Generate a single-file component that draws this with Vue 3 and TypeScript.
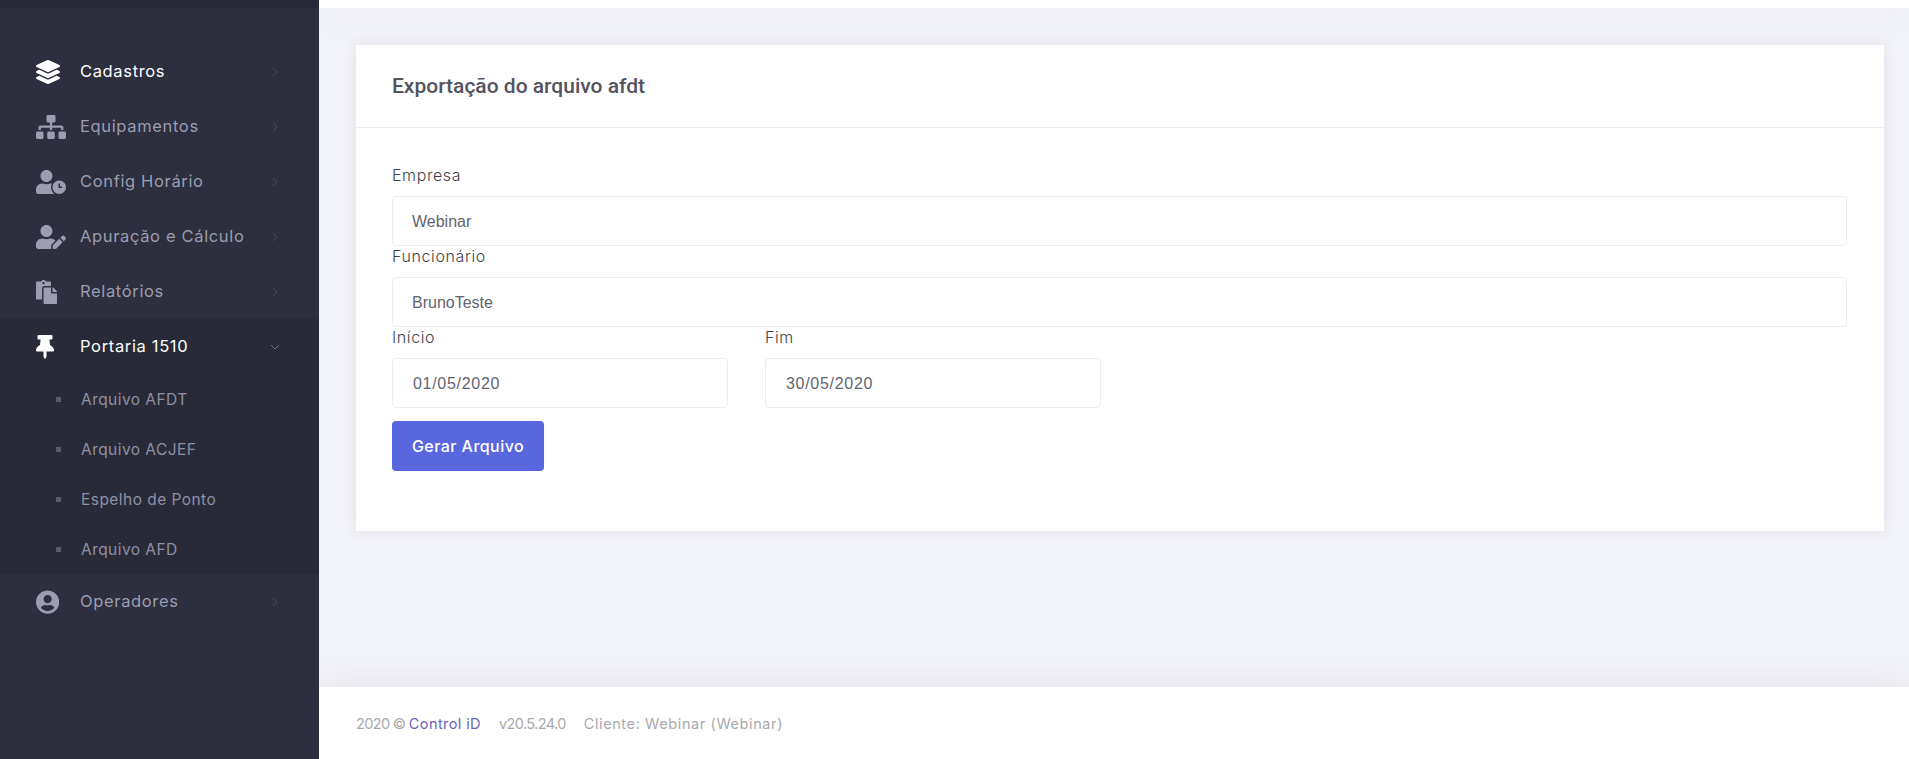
<script setup lang="ts">
interface MenuItem {
  label: string
  icon: string
  box: string
  open?: boolean
  active?: boolean
  children?: string[]
}

const menu: MenuItem[] = [
  {
    label: 'Cadastros',
    active: true,
    box: '0 0 512 512',
    icon: 'M12.41 148.02l232.94 105.67c6.8 3.09 14.49 3.09 21.29 0l232.94-105.67c16.55-7.51 16.55-32.52 0-40.03L266.65 2.31a25.607 25.607 0 0 0-21.29 0L12.41 107.98c-16.55 7.51-16.55 32.53 0 40.04zm487.18 88.28l-58.09-26.33-161.64 73.27c-7.56 3.43-15.59 5.17-23.86 5.17s-16.29-1.74-23.86-5.17L70.51 209.97l-58.1 26.33c-16.55 7.5-16.55 32.5 0 40l232.94 105.59c6.8 3.08 14.49 3.08 21.29 0L499.59 276.3c16.55-7.5 16.55-32.5 0-40zm0 127.8l-57.87-26.23-161.86 73.37c-7.56 3.43-15.59 5.17-23.86 5.17s-16.29-1.74-23.86-5.17L70.29 337.87 12.41 364.1c-16.55 7.5-16.55 32.5 0 40l232.94 105.59c6.8 3.08 14.49 3.08 21.29 0L499.59 404.1c16.55-7.5 16.55-32.5 0-40z',
  },
  {
    label: 'Equipamentos',
    box: '0 0 640 512',
    icon: 'M128 352H32c-17.67 0-32 14.33-32 32v96c0 17.67 14.33 32 32 32h96c17.67 0 32-14.33 32-32v-96c0-17.67-14.33-32-32-32zm-24-80h192v48h48v-48h192v48h48v-57.59c0-21.17-17.23-38.41-38.41-38.41H344v-64h40c17.67 0 32-14.33 32-32V32c0-17.67-14.33-32-32-32H256c-17.67 0-32 14.33-32 32v96c0 17.67 14.33 32 32 32h40v64H94.41C73.23 224 56 241.23 56 262.41V320h48v-48zm264 80h-96c-17.67 0-32 14.33-32 32v96c0 17.67 14.33 32 32 32h96c17.67 0 32-14.33 32-32v-96c0-17.67-14.33-32-32-32zm240 0h-96c-17.67 0-32 14.33-32 32v96c0 17.67 14.33 32 32 32h96c17.67 0 32-14.33 32-32v-96c0-17.67-14.33-32-32-32z',
  },
  {
    label: 'Config Horário',
    box: '0 0 640 512',
    icon: 'M496 224c-79.6 0-144 64.4-144 144s64.4 144 144 144 144-64.4 144-144-64.4-144-144-144zm64 150.3c0 5.3-4.4 9.7-9.7 9.7h-60.6c-5.3 0-9.7-4.4-9.7-9.7v-76.6c0-5.3 4.4-9.7 9.7-9.7h12.6c5.3 0 9.7 4.4 9.7 9.7V352h38.3c5.3 0 9.7 4.4 9.7 9.7v12.6zM320 368c0-27.8 6.7-54.1 18.2-77.5-8-1.5-16.2-2.5-24.6-2.5h-16.7c-22.2 10.2-46.9 16-72.9 16s-50.6-5.8-72.9-16h-16.7C60.2 288 0 348.2 0 422.4V464c0 26.5 21.5 48 48 48h347.1c-45.3-31.9-75.1-84.5-75.1-144zm-96-112c70.7 0 128-57.3 128-128S294.7 0 224 0 96 57.3 96 128s57.3 128 128 128z',
  },
  {
    label: 'Apuração e Cálculo',
    box: '0 0 640 512',
    icon: 'M224 256c70.7 0 128-57.3 128-128S294.7 0 224 0 96 57.3 96 128s57.3 128 128 128zm89.6 32h-16.7c-22.2 10.2-46.9 16-72.9 16s-50.6-5.8-72.9-16h-16.7C60.2 288 0 348.2 0 422.4V464c0 26.5 21.5 48 48 48h274.9c-2.4-6.8-3.4-14-2.6-21.3l6.8-60.9 1.2-11.1 7.9-7.9 77.3-77.3c-24.5-27.7-60-45.5-99.9-45.5zm45.3 145.3l-6.8 61c-1.1 10.2 7.5 18.8 17.6 17.6l60.9-6.8 137.9-137.9-71.7-71.7-137.9 137.8zM633 268.9L595.1 231c-9.3-9.3-24.5-9.3-33.8 0l-37.8 37.8-4.1 4.1 71.8 71.7 41.8-41.8c9.3-9.4 9.3-24.5 0-33.9z',
  },
  {
    label: 'Relatórios',
    box: '0 0 448 512',
    icon: 'M128 184c0-30.879 25.122-56 56-56h136V56c0-13.255-10.745-24-24-24h-80.61C204.306 12.89 183.637 0 160 0s-44.306 12.89-55.39 32H24C10.745 32 0 42.745 0 56v336c0 13.255 10.745 24 24 24h104V184zm32-144c13.255 0 24 10.745 24 24s-10.745 24-24 24-24-10.745-24-24 10.745-24 24-24zm184 248h104v200c0 13.255-10.745 24-24 24H184c-13.255 0-24-10.745-24-24V184c0-13.255 10.745-24 24-24h136v104c0 13.2 10.8 24 24 24zm104-38.059V256h-96v-96h6.059a24 24 0 0 1 16.97 7.029l65.941 65.941a24.002 24.002 0 0 1 7.03 16.971z',
  },
  {
    label: 'Portaria 1510',
    active: true,
    open: true,
    box: '0 0 384 512',
    icon: 'M298.028 214.267L285.793 96H328c13.255 0 24-10.745 24-24V24c0-13.255-10.745-24-24-24H56C42.745 0 32 10.745 32 24v48c0 13.255 10.745 24 24 24h42.207L85.972 214.267C37.465 236.82 0 277.261 0 328c0 13.255 10.745 24 24 24h136v104.007c0 1.242.289 2.467.845 3.578l24 48c2.941 5.882 11.364 5.893 14.311 0l24-48a8.008 8.008 0 0 0 .845-3.578V352h136c13.255 0 24-10.745 24-24-.001-51.183-37.983-91.42-85.973-113.733z',
    children: ['Arquivo AFDT', 'Arquivo ACJEF', 'Espelho de Ponto', 'Arquivo AFD'],
  },
  {
    label: 'Operadores',
    box: '0 0 496 512',
    icon: 'M248 8C111 8 0 119 0 256s111 248 248 248 248-111 248-248S385 8 248 8zm0 96c48.6 0 88 39.4 88 88s-39.4 88-88 88-88-39.4-88-88 39.4-88 88-88zm0 344c-58.7 0-111.3-26.6-146.5-68.2 18.8-35.4 55.6-59.8 98.5-59.8 2.4 0 4.8.4 7.1 1.1 13 4.2 26.6 6.9 40.9 6.9 14.3 0 28-2.7 40.9-6.9 2.3-.7 4.7-1.1 7.1-1.1 42.9 0 79.7 24.4 98.5 59.8C359.3 421.4 306.7 448 248 448z',
  },
]
</script>

<template>
  <div class="layout">
    <aside class="sidebar">
      <nav class="menu">
        <div v-for="item in menu" :key="item.label" class="menu-group" :class="{ open: item.open }">
          <div class="menu-item" :class="{ active: item.active }">
            <span class="menu-icon">
              <svg :viewBox="item.box" height="24" fill="currentColor"><path :d="item.icon" /></svg>
            </span>
            <span class="menu-label">{{ item.label }}</span>
            <svg class="chevron" width="12" height="12" viewBox="0 0 12 12" fill="none" stroke="currentColor" stroke-width="1">
              <path v-if="item.open" d="M2 4l4 4 4-4" />
              <path v-else d="M4 2l4 4-4 4" />
            </svg>
          </div>
          <div v-if="item.children" class="submenu">
            <div v-for="child in item.children" :key="child" class="submenu-item">
              <span class="bullet"></span>
              <span>{{ child }}</span>
            </div>
          </div>
        </div>
      </nav>
    </aside>

    <div class="page">
      <header class="topbar"></header>
      <main class="content">
        <section class="card">
          <div class="card-header">
            <h3>Exportação do arquivo afdt</h3>
          </div>
          <form class="card-body" @submit.prevent>
            <label class="field-label">Empresa</label>
            <div class="input">Webinar</div>
            <label class="field-label">Funcionário</label>
            <div class="input">BrunoTeste</div>
            <div class="date-row">
              <div class="date-col">
                <label class="field-label">Início</label>
                <div class="input date">01/05/2020</div>
              </div>
              <div class="date-col">
                <label class="field-label">Fim</label>
                <div class="input date">30/05/2020</div>
              </div>
            </div>
            <button class="submit" type="button">Gerar Arquivo</button>
          </form>
        </section>
      </main>
      <footer class="footer">
        <span><span class="copy">2020 © </span><a class="brand">Control iD</a></span>
        <span class="version">v20.5.24.0</span>
        <span class="client">Cliente: Webinar (Webinar)</span>
      </footer>
    </div>
  </div>
</template>

<style>
html,
body {
  margin: 0;
  background: #f2f3f8;
}
</style>

<style scoped>
.layout {
  display: flex;
  height: 759px;
  overflow: hidden;
  font-family: Inter, "Noto Sans", sans-serif;
}

.sidebar {
  width: 319px;
  flex-shrink: 0;
  background: #2d2e3e;
  border-top: 8px solid #282a39;
  box-sizing: border-box;
  padding-top: 36px;
}

.menu-item {
  height: 55px;
  display: flex;
  align-items: center;
  padding-left: 36px;
  padding-right: 38px;
  color: #9c9db1;
  font-size: 16.5px;
  letter-spacing: 0.65px;
}

.menu-item.active {
  color: #fff;
}

.menu-icon {
  width: 44px;
  height: 24px;
  flex-shrink: 0;
  display: flex;
}

.menu-icon svg {
  display: block;
}

.menu-label {
  flex: 1;
  padding-bottom: 2px;
}

.chevron {
  color: #4b4c5f;
}

.menu-group.open {
  background: #292a38;
}

.menu-group.open .chevron {
  color: #6b6c80;
}

.submenu-item {
  height: 50px;
  display: flex;
  align-items: center;
  padding-left: 56px;
  color: #8f90a4;
  font-size: 15.5px;
  letter-spacing: 0.45px;
}

.bullet {
  width: 5px;
  height: 5px;
  background: #5a5b6e;
  margin-right: 20px;
}

.page {
  flex: 1;
  min-width: 0;
  display: flex;
  flex-direction: column;
}

.topbar {
  height: 8px;
  background: #fff;
  position: relative;
  box-shadow: 0 0 40px rgba(82, 63, 105, 0.1);
}

.content {
  flex: 1;
  padding: 37px 25px 0 37px;
  background: #f2f3f8;
}

.card {
  background: #fff;
  height: 486px;
  position: relative;
  box-shadow: 0 0 13px rgba(82, 63, 105, 0.1);
}

.card-header {
  height: 83px;
  box-sizing: border-box;
  border-bottom: 1px solid #ebedf2;
  padding-left: 36px;
  display: flex;
  align-items: center;
}

.card-header h3 {
  margin: 0;
  font-family: Roboto, sans-serif;
  font-weight: 500;
  font-size: 21px;
  color: #545360;
}

.card-body {
  padding: 37px 37px 0 36px;
}

.field-label {
  display: block;
  height: 31px;
  line-height: 21px;
  font-size: 16px;
  font-weight: 300;
  letter-spacing: 0.6px;
  color: #3f3f4a;
}

.input {
  height: 50px;
  box-sizing: border-box;
  border: 1px solid #ebedf2;
  border-radius: 4px;
  padding-left: 19px;
  padding-top: 2px;
  display: flex;
  align-items: center;
  font-family: "Liberation Sans", Arial, sans-serif;
  font-size: 16px;
  color: #626470;
}

.date-row {
  display: flex;
  gap: 37px;
}

.date-col {
  width: 336px;
}

.date {
  padding-left: 20px;
  letter-spacing: 0.7px;
}

.submit {
  display: block;
  margin-top: 13px;
  width: 152px;
  height: 50px;
  background: #5867dd;
  border: none;
  border-radius: 4px;
  color: #fff;
  font-family: inherit;
  font-size: 16px;
  font-weight: 500;
  letter-spacing: 0.45px;
  padding: 0;
}

.footer {
  height: 72px;
  background: #fff;
  position: relative;
  display: flex;
  align-items: center;
  gap: 18px;
  padding-left: 37px;
  font-size: 14.5px;
  color: #a9a9ae;
  box-shadow: 0 0 40px rgba(82, 63, 105, 0.1);
}

.copy {
  letter-spacing: -0.65px;
}

.brand {
  color: #6a62b5;
  letter-spacing: 0.4px;
}

.version {
  letter-spacing: -0.6px;
}

.client {
  letter-spacing: 0.6px;
}
</style>
